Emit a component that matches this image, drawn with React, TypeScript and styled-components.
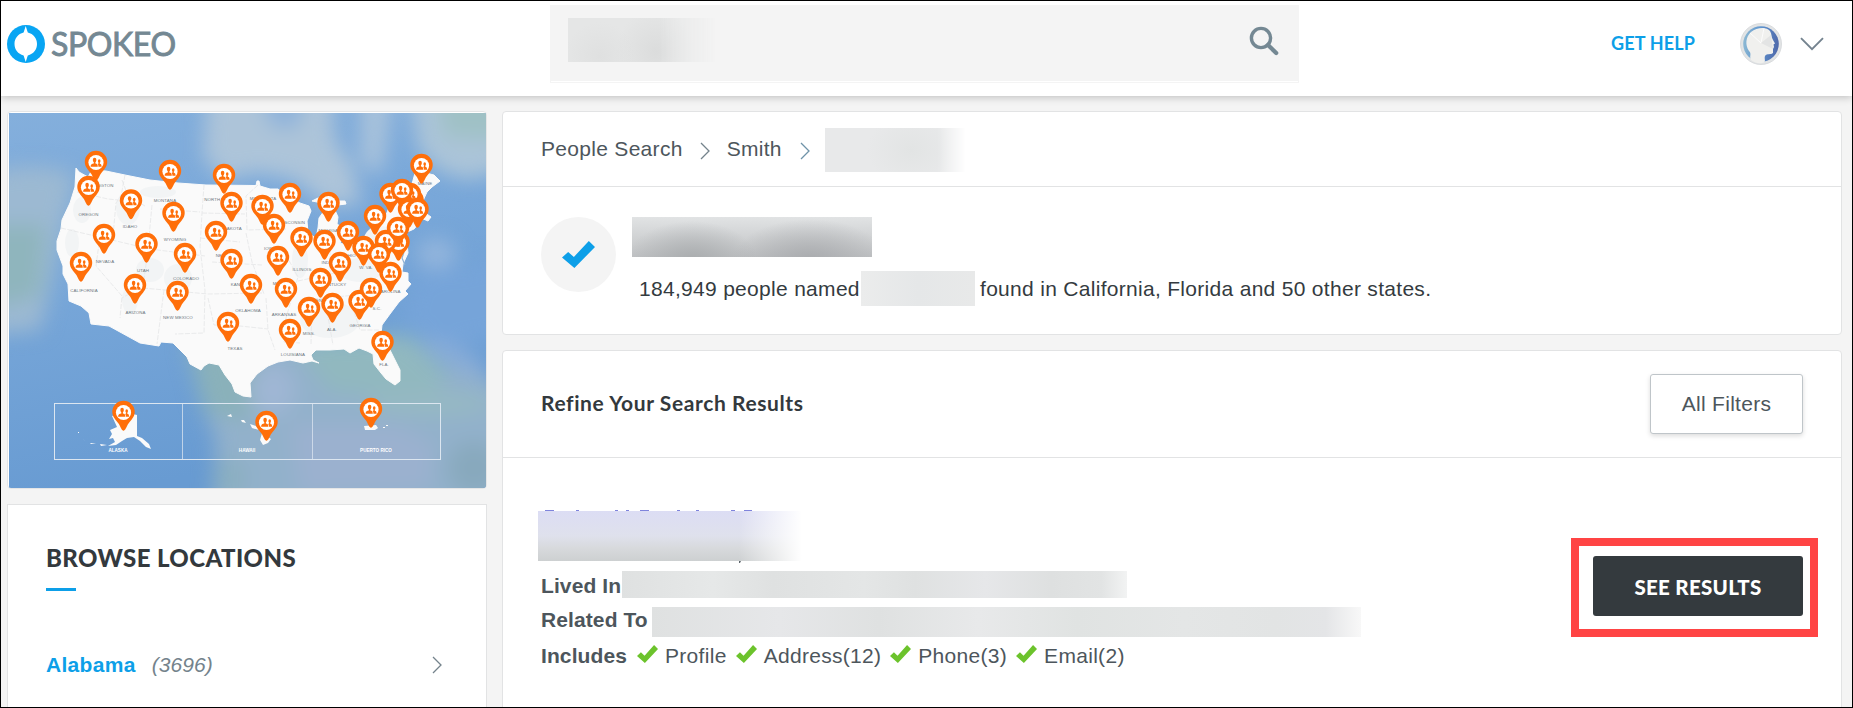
import React from "react";
import styled, { createGlobalStyle } from "styled-components";

const GlobalStyle = createGlobalStyle`
  * { box-sizing: border-box; }
  html, body { margin: 0; padding: 0; background: #f4f4f4; }
  body { overflow: hidden; }
`;

const sans = `"Liberation Sans", Arial, sans-serif`;
const display = `Lato, "Open Sans", sans-serif`;

const Page = styled.div`
  width: 1853px;
  height: 708px;
  border: 1px solid #000;
  background: #f4f4f4;
  overflow: hidden;
  display: flex;
  flex-direction: column;
  font: 21px/24px ${sans};
  letter-spacing: 0.3px;
  color: #4d565c;
`;

const Header = styled.header`
  flex: none;
  height: 95px;
  display: flex;
  align-items: flex-start;
  background: #fff;
  box-shadow: 0 1px 8px rgba(0, 0, 0, 0.24);
`;

const Brand = styled.div`
  width: 549px;
  padding: 24px 0 0 6px;
  display: flex;
  align-items: center;
`;

const BrandName = styled.span`
  margin-left: 6px;
  font: 400 32px/38px ${display};
  letter-spacing: -0.4px;
  color: #748893;
  -webkit-text-stroke: 0.9px #748893;
`;

const SearchBox = styled.div`
  width: 749px;
  height: 78px;
  margin-top: 4px;
  padding: 12px 19px 0 17px;
  display: flex;
  justify-content: space-between;
  align-items: flex-start;
  background: #f4f4f4;
  border: 1px solid #f4f4f4;
  box-shadow: inset 0 -1px 0 #fff;
`;

const SearchIcon = styled.svg`
  margin-top: 8px;
`;

const Account = styled.div`
  margin-left: auto;
  padding: 22px 28px 0 0;
  display: flex;
  align-items: center;
`;

const HelpLink = styled.a`
  margin-right: 45px;
  padding-bottom: 3px;
  font: 700 18px/24px ${display};
  letter-spacing: 0.15px;
  color: #0d9fe8;
`;

const ChevronDown = styled.svg`
  margin-left: 18px;
`;

const Body = styled.div`
  flex: 1;
  min-height: 0;
  display: flex;
  align-items: flex-start;
  gap: 15px;
  padding: 15px 0 0 6px;
`;

const Side = styled.aside`
  width: 480px;
  display: flex;
  flex-direction: column;
  gap: 15px;
`;

const MapCard = styled.div`
  height: 378px;
  border: 1px solid #e4e5e6;
  border-radius: 4px;
  padding-top: 1px;
  padding-left: 1px;
  background: #fff;
  overflow: hidden;
`;

const MapSvg = styled.svg`
  display: block;
`;

const Card = styled.section<{ $h: number }>`
  height: ${(p) => p.$h}px;
  background: #fff;
  border: 1px solid #e2e3e4;
  border-radius: 4px;
`;

const BrowseCard = styled(Card)`
  padding: 37px 44px 0 38px;
  border-radius: 0;
`;

const BrowseTitle = styled.h2`
  margin: 0;
  font: 900 24px/32px ${display};
  letter-spacing: 0.4px;
  color: #33393d;
  &::after {
    content: "";
    display: block;
    width: 30px;
    height: 3px;
    margin-top: 14px;
    background: #0d9fe8;
  }
`;

const LocationRow = styled.div`
  margin-top: 62px;
  display: flex;
  align-items: center;
`;

const LocationName = styled.a`
  font-weight: 700;
  color: #0d9fe8;
`;

const LocationCount = styled.span`
  margin-left: 16px;
  flex: 1;
  font-style: italic;
  letter-spacing: 0.1px;
  color: #74838c;
`;

const Main = styled.main`
  width: 1340px;
  display: flex;
  flex-direction: column;
  gap: 15px;
`;

const Crumbs = styled.nav`
  height: 75px;
  padding-left: 38px;
  display: flex;
  align-items: center;
  border-bottom: 1px solid #e2e3e4;
`;

const CrumbArrow = styled.svg<{ $l: number; $r: number; $t: number }>`
  margin: ${(p) => p.$t}px ${(p) => p.$r}px 0 ${(p) => p.$l}px;
`;

const Summary = styled.div`
  padding: 30px 0 0 38px;
  display: flex;
  align-items: flex-start;
`;

const CheckCircle = styled.div`
  width: 75px;
  height: 75px;
  border-radius: 50%;
  background: #f4f4f4;
  display: flex;
  align-items: center;
  justify-content: center;
`;

const SummaryText = styled.div`
  margin-left: 16px;
`;

const FoundLine = styled.p`
  margin: 14px 0 0;
  padding-left: 7px;
  height: 35px;
  display: flex;
  align-items: center;
  color: #343b40;
`;

const NamedCount = styled.span`
  width: 222px;
`;

const FoundIn = styled.span`
  margin-left: 5px;
`;

/* Smooth grey block that stands in for private text. */
const Redacted = styled.span<{ $w: number; $h: number; $bg: string; $fade?: number; $top?: number }>`
  display: block;
  flex: none;
  width: ${(p) => p.$w}px;
  height: ${(p) => p.$h}px;
  margin-top: ${(p) => p.$top ?? 0}px;
  background: ${(p) => p.$bg};
  ${(p) =>
    p.$fade
      ? `mask-image: linear-gradient(to right, #000 ${p.$fade}%, transparent 100%);`
      : ""}
`;

const RefineBar = styled.div`
  height: 107px;
  padding: 0 38px;
  display: flex;
  align-items: center;
  justify-content: space-between;
  border-bottom: 1px solid #e2e3e4;
`;

const RefineTitle = styled.h3`
  margin: 0;
  padding-bottom: 2px;
  font: 700 21px/24px ${display};
  letter-spacing: 0.6px;
  color: #33393d;
`;

const FilterButton = styled.button`
  width: 153px;
  height: 60px;
  padding: 0;
  background: #fff;
  border: 1px solid #bfc5c9;
  border-radius: 3px;
  box-shadow: 0 2px 5px rgba(0, 0, 0, 0.14);
  font: 21px/24px ${sans};
  letter-spacing: 0.3px;
  color: #4d565c;
`;

const Result = styled.div`
  padding: 51px 23px 0 38px;
  display: flex;
  justify-content: space-between;
  align-items: flex-start;
`;

const ResultName = styled.svg`
  display: block;
  margin-left: -3px;
`;

const Field = styled.div<{ $h: number; $top: number }>`
  display: flex;
  align-items: center;
  height: ${(p) => p.$h}px;
  margin-top: ${(p) => p.$top}px;
`;

const Label = styled.strong<{ $w: number; $down?: number }>`
  width: ${(p) => p.$w}px;
  margin-top: ${(p) => p.$down ?? 0}px;
  letter-spacing: 0.1px;
  white-space: nowrap;
`;

const Included = styled.span`
  display: flex;
  align-items: center;
  gap: 7px;
  margin-right: 9px;
`;

const TickIcon = styled.svg`
  margin-bottom: 4px;
`;

const Highlight = styled.div`
  margin-top: 29px;
  padding: 10px 7px 13px 14px;
  border: 8px solid #ff4444;
`;

const ResultsButton = styled.button`
  display: block;
  width: 210px;
  height: 60px;
  padding: 2px 0 0;
  border: 0;
  border-radius: 3px;
  background: #343a3e;
  color: #fff;
  font: 900 20.5px/24px ${display};
  letter-spacing: 0.3px;
`;

const Arrow = ({ l = 0, r = 0, t = 3, color = "#74838c" }: { l?: number; r?: number; t?: number; color?: string }) => (
  <CrumbArrow $l={l} $r={r} $t={t} width="10" height="18" viewBox="0 0 10 18" fill="none" stroke={color} strokeWidth="1.3">
    <path d="M1 1 L9 9 L1 17" />
  </CrumbArrow>
);

const tickPath = "M0 16.5 L6 11 L11.5 16 L26 0 L32 6 L12 27 Z";

const Tick = () => (
  <TickIcon width="21" height="18" viewBox="0 0 32 27" preserveAspectRatio="none">
    <path d={tickPath} fill="#6cc32c" />
  </TickIcon>
);

const included = ["Profile", "Address(12)", "Phone(3)", "Email(2)"];

/* Marker head centres, painted in order. */
const pins: [number, number][] = [
  [96, 162], [88.5, 187], [170, 171], [224, 175], [131, 200.5], [173.5, 213], [231.5, 203],
  [262.5, 206], [290, 194], [328.5, 203], [421.5, 165], [412.5, 200], [390.5, 194], [410, 194],
  [402, 190], [409, 209], [417.5, 209], [375, 216], [274, 225], [216, 232], [104, 235],
  [146.5, 244], [301.5, 238], [324.5, 241], [348, 232], [398.5, 242], [386, 241], [398, 228],
  [363.5, 247], [379, 254], [81, 263], [185, 254], [231.5, 260], [278, 257], [340, 263],
  [390.5, 273], [320.5, 279], [135, 285], [177.5, 292], [251, 285], [286, 289], [309, 308],
  [332.5, 304], [359.5, 301], [371, 289], [228, 323], [290, 330], [382.5, 342], [123.5, 412],
  [266.5, 422], [371, 409],
];

const stateLabels: [string, number, number][] = [
  ["WASHINGTON", 98, 187], ["OREGON", 88.5, 216], ["IDAHO", 130, 228], ["MONTANA", 165, 202],
  ["WYOMING", 175, 241], ["NEVADA", 105, 263], ["UTAH", 143, 272], ["COLORADO", 186, 280],
  ["CALIFORNIA", 84, 291.5], ["ARIZONA", 135.5, 314], ["NEW MEXICO", 178, 319],
  ["NORTH DAKOTA", 222, 201], ["SOUTH DAKOTA", 224, 229.5], ["MINNESOTA", 263, 200],
  ["NEBRASKA", 228, 256.5], ["KANSAS", 240, 285.5], ["OKLAHOMA", 248, 312], ["TEXAS", 235, 350],
  ["IOWA", 270, 249.5], ["MISSOURI", 284, 285], ["WISCONSIN", 292, 224], ["ILLINOIS", 302, 271],
  ["IND.", 326, 264], ["MICHIGAN", 330, 232], ["KENTUCKY", 334, 286], ["TENN.", 320, 302],
  ["ARKANSAS", 284, 316], ["LOUISIANA", 293, 356], ["MISS.", 309, 335], ["ALA.", 332, 331],
  ["GEORGIA", 360, 326.5], ["S.C.", 377, 310], ["CAROLINA", 389, 293], ["W. VA.", 366, 269],
  ["OHIO", 350, 257], ["FLA.", 384, 365.5], ["MAINE", 425, 184.5],
];

const USA =
  "M76 168 L79 172 L88 177 L92 170 L106 171 L125 175 L150 180 L178 183 L206 185 L256 185.5 L257 181 L259 181 L260 186 L270 189 L278 189 L284 194 L292 199 L300 203 L309 206 L311 211 L307 221 L308 233 L316 238 L318 228 L319 218 L324 211 L324 206 L317 202 L312 201 L318 198 L326 199 L336 201 L345 201 L346 204 L338 205 L334 208 L338 217 L337 224 L343 228 L344 237 L340 243 L350 246 L360 240 L370 234 L380 225 L386 215 L390 205 L402 201 L410 196 L412 184 L415 173 L420 162 L426 173 L434 175 L440 181 L432 187 L427 192 L422 203 L424 212 L431 217 L428 221 L421 218 L412 225 L420 222 L414 229 L405 233 L407 243 L408 253 L403 264 L402 272 L408 273 L408 281 L411 284 L405 291 L408 294 L399 302 L390 314 L382 325 L381 334 L388 346 L395 360 L400 370 L400 381 L395 385 L386 379 L381 373 L374 364 L373 354 L367 351 L359 348 L350 353 L344 349 L330 350 L316 350 L311 355 L313 360 L319 363 L312 361 L303 363 L290 360 L278 362 L268 366 L257 374 L250 383 L251 397 L243 396 L235 392 L232 384 L225 375 L219 365 L209 363 L204 366 L201 370 L190 364 L187 357 L177 347 L173 343 L161 342 L159 346 L140 343 L109 326 L91 324 L89 313 L81 306 L69 301 L68 284 L63 274 L63 266 L57 250 L57 241 L61 229 L62 220 L70 203 L75 187 Z";

const borders =
  "M77 192 L108 199 L118 200 M61 228 L150 249 L205 256 M125 175 L121 196 L116 203 L113 236 M100 236 L96 266 L122 296 L120 318 M148 250 L143 286 L122 298 M152 205 L148 248 M160 209 L200 212 M204 185 L202 213 L200 247 L205 290 L204 333 L175 334 M164 290 L157 344 M143 288 L208 294 L262 293 M122 180 L128 196 L145 206 M202 213 L245 214 M200 238 L240 242 M212 262 L262 265 M258 185 L246 196 L247 230 L286 229 M246 233 L252 262 L264 294 M208 298 L214 325 L240 326 L268 329 M266 298 L268 330 L275 350 M286 255 L298 277 L286 318 L284 342 L300 343 M312 300 L311 345 M325 300 L333 345 M300 300 L380 293 M350 300 L360 330 L380 330 M330 250 L330 275 M298 281 L340 272";

const Pin = ({ x, y }: { x: number; y: number }) => (
  <g transform={`translate(${x} ${y + 0.7})`}>
    <path d="M0 18 C-1.8 18 -2.6 14.5 -5 10.8 C-7.4 7.2 -11.2 4.3 -11.2 -0.8 A11.2 11.2 0 0 1 11.2 -0.8 C11.2 4.3 7.4 7.2 5 10.8 C2.6 14.5 1.8 18 0 18 Z" fill="#ff6f0a" />
    <circle cy="-0.2" r="7.6" fill="#fff" />
    <g fill="#ff6f0a">
      <ellipse cx="-1.4" cy="-2.6" rx="1.8" ry="2.3" />
      <path d="M-5.4 4 C-5.4 1.6 -4 1.4 -2.2 0.9 V-1 H-0.6 V0.9 C1 1.4 1.8 1.6 1.8 4 Z" />
      <ellipse cx="3.2" cy="-1.6" rx="1.3" ry="1.8" />
      <path d="M2.4 4 C2.4 2.6 2.2 1.8 1.6 1.2 L2.5 0.9 V-0.5 H3.8 V1 C5 1.4 5.6 1.8 5.6 4 Z" />
    </g>
  </g>
);

const CoverageMap = () => (
  <MapSvg width="477" height="375" viewBox="9 113 477 375">
    <defs>
      <filter id="soft" x="-20%" y="-20%" width="140%" height="140%" colorInterpolationFilters="sRGB">
        <feGaussianBlur stdDeviation="10" />
      </filter>
      <linearGradient id="sea" x1="0" y1="0" x2="0.25" y2="1">
        <stop offset="0" stopColor="#84afdc" />
        <stop offset="0.35" stopColor="#7ba9da" />
        <stop offset="1" stopColor="#689bd2" />
      </linearGradient>
    </defs>
    <rect x="9" y="113" width="477" height="375" fill="url(#sea)" />
    <g filter="url(#soft)">
      <path d="M-20 175 Q35 158 75 175 L62 230 L50 290 L40 330 L-20 335 Z" fill="#9cb9d2" />
      <path d="M-20 225 L45 225 L40 295 L-20 310 Z" fill="#8fb5bd" />
      <path d="M208 80 H330 L335 140 L352 165 L362 205 L325 205 L295 180 L258 172 L225 180 L203 158 Z" fill="#adc4d9" />
      <path d="M262 80 H306 L300 124 L284 130 L268 122 Z" fill="#8fb3da" />
      <path d="M360 80 H394 L388 135 L382 175 L360 165 Z" fill="#a8c2db" />
      <path d="M408 80 H510 V168 L470 180 L440 172 L418 150 Z" fill="#abc4d8" />
      <path d="M435 80 H510 V140 L445 136 Z" fill="#9fc1c5" />
      <ellipse cx="436" cy="254" rx="20" ry="16" fill="#93b5dc" />
      <path d="M190 345 L400 340 L430 362 L510 385 V515 H212 L216 440 L200 400 Z" fill="#92b1cb" />
      <path d="M185 340 L255 350 L265 400 L245 420 L205 412 Z" fill="#8ab1ba" />
      <path d="M290 340 L410 335 L450 375 L425 400 L330 392 Z" fill="#91b8bf" />
      <ellipse cx="272" cy="390" rx="24" ry="26" fill="#9fb6d4" />
      <path d="M290 425 L400 425 L435 445 L430 490 L300 495 Z" fill="#9bb1cf" />
      <ellipse cx="230" cy="478" rx="16" ry="20" fill="#8bafc0" />
      <ellipse cx="430" cy="404" rx="62" ry="12" fill="#96b9c3" />
      <ellipse cx="474" cy="468" rx="26" ry="26" fill="#88a9bd" />
      <path d="M415 275 L510 255 V335 L445 350 L400 325 Z" fill="#76a4d9" />
      <ellipse cx="455" cy="357" rx="36" ry="10" fill="#8aadd8" transform="rotate(28 455 357)" />
    </g>
    <path d={USA} fill="#fafafa" stroke="#fafafa" strokeWidth="1" strokeLinejoin="round" />
    <g fill="#f2f4f5">
      <ellipse cx="82" cy="210" rx="9" ry="13" />
      <ellipse cx="128" cy="208" rx="12" ry="17" />
      <ellipse cx="72" cy="243" rx="7" ry="14" />
      <ellipse cx="158" cy="192" rx="18" ry="6" />
      <ellipse cx="150" cy="270" rx="14" ry="12" />
      <ellipse cx="178" cy="278" rx="14" ry="14" />
      <ellipse cx="130" cy="300" rx="8" ry="14" />
      <ellipse cx="330" cy="320" rx="30" ry="18" />
      <ellipse cx="360" cy="270" rx="22" ry="12" />
      <ellipse cx="380" cy="240" rx="16" ry="14" />
      <ellipse cx="300" cy="260" rx="8" ry="18" />
    </g>
    <path d={borders} fill="none" stroke="#e4e6e7" strokeWidth="0.8" strokeDasharray="5 1.5" />
    <path d="M404 252 L402 258 L405 265 M401 246 L403 256" fill="none" stroke="#8fb2d4" strokeWidth="1.2" />
    <g fontFamily={sans} fontSize="4.4" fill="#6d7780" textAnchor="middle" letterSpacing="0.1">
      {stateLabels.map(([name, x, y]) => (
        <text key={name} x={x} y={y}>{name}</text>
      ))}
    </g>
    <g fill="none" stroke="#dce6f0" strokeWidth="1">
      <rect x="54.5" y="403.5" width="386" height="56" />
      <path d="M182.5 403 V459 M312.5 403 V459" strokeOpacity="0.75" />
    </g>
    <g fill="#fafafa">
      <path d="M112 416 L118 414 L126 416 L133 414 L137 415 V436 L142 438 L149 444 L151 449 L146 447 L140 441 L134 437 L127 438 L122 441 L116 445 L108 446 L115 442 L113 438 L109 439 L112 434 L110 430 L117 427 Z" />
      <path d="M107 445 L101 446 L100 444 Z M96 444 L90 444 L91 443 Z M85 441 L82 438 L81 437 Z M78 432 h1 v1 h-1 Z" />
      <path d="M227 416 L231 414 L232 417 Z M241 420 L244 420 L246 423 L242 422 Z M250 424 L256 426 L259 430 L252 428 Z M262 433 L271 439 L268 443 L263 445 L260 440 Z" />
      <path d="M364 426 L376 425 L378 428 L375 430 L365 430 Z M383 427 h2 v1 h-2 Z M386 425 h2 v1 h-2 Z" />
    </g>
    <g fontFamily={sans} fontSize="4.6" fontWeight="700" fill="#fff" textAnchor="middle" letterSpacing="0">
      <text x="118" y="452">ALASKA</text>
      <text x="247" y="452">HAWAII</text>
      <text x="376" y="452">PUERTO RICO</text>
    </g>
    {pins.map(([x, y]) => (
      <Pin key={`${x}-${y}`} x={x} y={y} />
    ))}
  </MapSvg>
);

const Avatar = () => (
  <svg width="42" height="42" viewBox="0 0 42 42">
    <defs>
      <linearGradient id="rim" x1="0" y1="0.4" x2="1" y2="0.5">
        <stop offset="0" stopColor="#8db9d3" />
        <stop offset="0.45" stopColor="#5f95cf" />
        <stop offset="1" stopColor="#4e68aa" />
      </linearGradient>
    </defs>
    <circle cx="21" cy="21" r="20.5" fill="#e2e4e5" stroke="#d3d6d8" strokeWidth="0.8" />
    <circle cx="21" cy="21" r="17.8" fill="url(#rim)" />
    <path d="M11 37 C9 33 12 31 9 28 C5 22 5.5 14 11 9 C17 4 27 4 30 8 C32 11 31 14 33 17 L35 20.5 L33.5 21.5 L34 24 L33 26 L33 30 C31 32 27 30 25 33 C24 36 26 38 24 39.5 C20 41 14 40 11 37 Z" fill="#f0f0ee" />
    <path d="M21 20 L10 10 M21 20 L24 5" stroke="#fff" strokeWidth="0.8" />
    <path d="M21 20 L31 12 L33 26 Z" fill="#e3e4e4" />
  </svg>
);

export default function App() {
  return (
    <>
      <GlobalStyle />
      <Page>
        <Header>
          <Brand>
            <svg width="38" height="38" viewBox="0 0 38 38">
              <circle cx="19" cy="19" r="19" fill="#08a5f3" />
              <path d="M18.7 1 L20.8 7.6 C26.5 9 30 13.4 30 19 C30 24.6 26.5 29 20.8 30.4 L18.7 37 L16.6 30.4 C11 29 7.5 24.6 7.5 19 C7.5 13.4 11 9 16.6 7.6 Z" fill="#fff" />
            </svg>
            <BrandName>SPOKEO</BrandName>
          </Brand>
          <SearchBox>
            <Redacted
              $w={148}
              $h={44}
              $fade={62}
              $bg="radial-gradient(ellipse 36px 34px at 32px 38px, #dfe0e0, transparent), radial-gradient(ellipse 40px 42px at 88px 34px, #dbdcdc, transparent), #e5e6e6"
            />
            <SearchIcon width="30" height="30" viewBox="0 0 30 30" fill="none" stroke="#748893">
              <circle cx="12" cy="12" r="9.6" strokeWidth="3.4" />
              <path d="M19 19 L27.2 27" strokeWidth="4.2" strokeLinecap="round" />
            </SearchIcon>
          </SearchBox>
          <Account>
            <HelpLink>GET HELP</HelpLink>
            <Avatar />
            <ChevronDown width="24" height="14" viewBox="0 0 24 14" fill="none" stroke="#74838f" strokeWidth="1.9">
              <path d="M1 1.2 L12 12.2 L23 1.2" />
            </ChevronDown>
          </Account>
        </Header>

        <Body>
          <Side>
            <MapCard>
              <CoverageMap />
            </MapCard>
            <BrowseCard $h={300}>
              <BrowseTitle>BROWSE LOCATIONS</BrowseTitle>
              <LocationRow>
                <LocationName>Alabama</LocationName>
                <LocationCount>(3696)</LocationCount>
                <Arrow t={0} />
              </LocationRow>
            </BrowseCard>
          </Side>

          <Main>
            <Card $h={224}>
              <Crumbs>
                <span>People Search</span>
                <Arrow l={17} r={17} />
                <span>Smith</span>
                <Arrow l={18} r={15} color="#6f93a8" />
                <Redacted
                  $w={141}
                  $h={44}
                  $top={2}
                  $fade={80}
                  $bg="radial-gradient(ellipse 44px 36px at 86px 22px, #e2e4e4, transparent), #e8e9ea"
                />
              </Crumbs>
              <Summary>
                <CheckCircle>
                  <svg width="33" height="27" viewBox="0 0 32 27" preserveAspectRatio="none">
                    <path d={tickPath} fill="#0d9fe8" />
                  </svg>
                </CheckCircle>
                <SummaryText>
                  <Redacted
                    $w={240}
                    $h={40}
                    $bg="radial-gradient(ellipse 66px 40px at 60px 44px, #a9acae, transparent), radial-gradient(ellipse 78px 42px at 178px 44px, #a9abae, transparent), linear-gradient(#e1e3e4, #c0c2c4)"
                  />
                  <FoundLine>
                    <NamedCount>184,949 people named</NamedCount>
                    <Redacted $w={114} $h={35} $bg="linear-gradient(90deg, #ebecec, #e5e7e8 50%, #e8e9e9)" />
                    <FoundIn>found in California, Florida and 50 other states.</FoundIn>
                  </FoundLine>
                </SummaryText>
              </Summary>
            </Card>

            <Card $h={370}>
              <RefineBar>
                <RefineTitle>Refine Your Search Results</RefineTitle>
                <FilterButton>All Filters</FilterButton>
              </RefineBar>
              <Result>
                <div>
                  <ResultName width="264" height="54" viewBox="0 0 264 54">
                    <defs>
                      <linearGradient id="nameTone" x1="0" y1="0" x2="0" y2="1">
                        <stop offset="0" stopColor="#dcddf4" />
                        <stop offset="0.5" stopColor="#dfe1ec" />
                        <stop offset="0.75" stopColor="#d7d9dc" />
                        <stop offset="1" stopColor="#cdd0d1" />
                      </linearGradient>
                      <linearGradient id="nameFade">
                        <stop offset="0.76" stopColor="#fff" stopOpacity="0" />
                        <stop offset="1" stopColor="#fff" />
                      </linearGradient>
                    </defs>
                    <path d="M7 1.5 h9 M38 1.5 h3 M77 1.5 h3 M88 1.5 h3 M102 1.5 h9 M139 1.5 h3 M158 1.5 h3 M193 1.5 h4 M206 1.5 h8" stroke="#7f84dc" />
                    <rect y="2" width="264" height="50" fill="url(#nameTone)" />
                    <rect y="2" width="264" height="50" fill="url(#nameFade)" />
                    <path d="M201 52 h2 l-1 2 h-1 Z" fill="#5c646a" />
                  </ResultName>
                  <Field $h={27} $top={8}>
                    <Label $w={81} $down={3}>Lived In</Label>
                    <Redacted
                      $w={505}
                      $h={27}
                      $bg="linear-gradient(90deg, #dfe1e1, #e6e8e8 18%, #dfe1e1 30%, #e4e6e6 48%, #dfe1e1 58%, #e6e7e9 72%, #dee0e0 85%, #e2e4e4 95%, #f2f3f3)"
                    />
                  </Field>
                  <Field $h={30} $top={9}>
                    <Label $w={111} $down={-4}>Related To</Label>
                    <Redacted
                      $w={709}
                      $h={30}
                      $bg="linear-gradient(90deg, #dfe1e1, #e6e7e9 18%, #dfe1e1 32%, #e8e9ea 46%, #e0e3e2 60%, #e4e6e6 75%, #e2e4e4 88%, #e4e5e7 95%, #f8f8f8)"
                    />
                  </Field>
                  <Field $h={30} $top={4}>
                    <Label $w={96}>Includes</Label>
                    {included.map((item) => (
                      <Included key={item}>
                        <Tick />
                        {item}
                      </Included>
                    ))}
                  </Field>
                </div>
                <Highlight>
                  <ResultsButton>SEE RESULTS</ResultsButton>
                </Highlight>
              </Result>
            </Card>
          </Main>
        </Body>
      </Page>
    </>
  );
}
